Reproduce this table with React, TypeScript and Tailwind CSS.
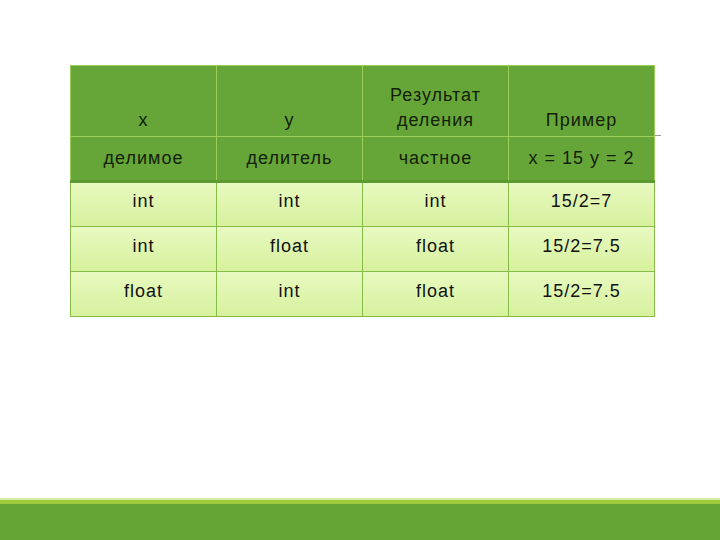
const rows = [
  ["int", "int", "int", "15/2=7"],
  ["int", "float", "float", "15/2=7.5"],
  ["float", "int", "float", "15/2=7.5"],
];

export default function App() {
  return (
    <div
      className="relative flex h-[540px] w-[720px] flex-col bg-white"
      style={{ fontFamily: '"Liberation Sans", Arial, sans-serif' }}
    >
      <div className="ml-[70px] mt-[65px] w-[585px]">
        <table className="w-full table-fixed border-collapse text-[18px] leading-[25px] tracking-[1px] text-[#111]">
          <thead className="bg-[#66a638] text-[#142108]">
            <tr className="h-[71px]">
              <th className="border border-[#9ccf5a] px-2 pb-[3px] align-bottom font-normal">x</th>
              <th className="border border-[#9ccf5a] px-2 pb-[3px] align-bottom font-normal">y</th>
              <th className="border border-[#9ccf5a] px-2 pb-[3px] align-bottom font-normal">
                Результат
                <br />
                деления
              </th>
              <th className="border border-[#9ccf5a] px-2 pb-[3px] align-bottom font-normal">Пример</th>
            </tr>
            <tr className="h-[45px] border-b-[3px] border-b-[#5b9a30]">
              <th className="border border-[#9ccf5a] border-b-[#5b9a30] px-2 font-normal">делимое</th>
              <th className="border border-[#9ccf5a] border-b-[#5b9a30] px-2 font-normal">делитель</th>
              <th className="border border-[#9ccf5a] border-b-[#5b9a30] px-2 font-normal">частное</th>
              <th className="border border-[#9ccf5a] border-b-[#5b9a30] px-2 font-normal">x = 15 y = 2</th>
            </tr>
          </thead>
          <tbody>
            {rows.map((r, i) => (
              <tr key={i} className="h-[45px] bg-gradient-to-b from-[#e8f9c0] to-[#d6f19c]">
                {r.map((c, j) => (
                  <td key={j} className="border border-[#86bc48] px-2 pb-[6px] text-center">
                    {c}
                  </td>
                ))}
              </tr>
            ))}
          </tbody>
        </table>
      </div>
      <div className="absolute left-[655px] top-[135px] h-px w-[6px] bg-[#9a9a9a]" />
      <div className="mt-auto">
        <div className="h-[2px] bg-[#d6eaa8]" />
        <div className="h-[4px] bg-[#9ccc3c]" />
        <div className="h-[36px] bg-[#64a536]" />
      </div>
    </div>
  );
}
